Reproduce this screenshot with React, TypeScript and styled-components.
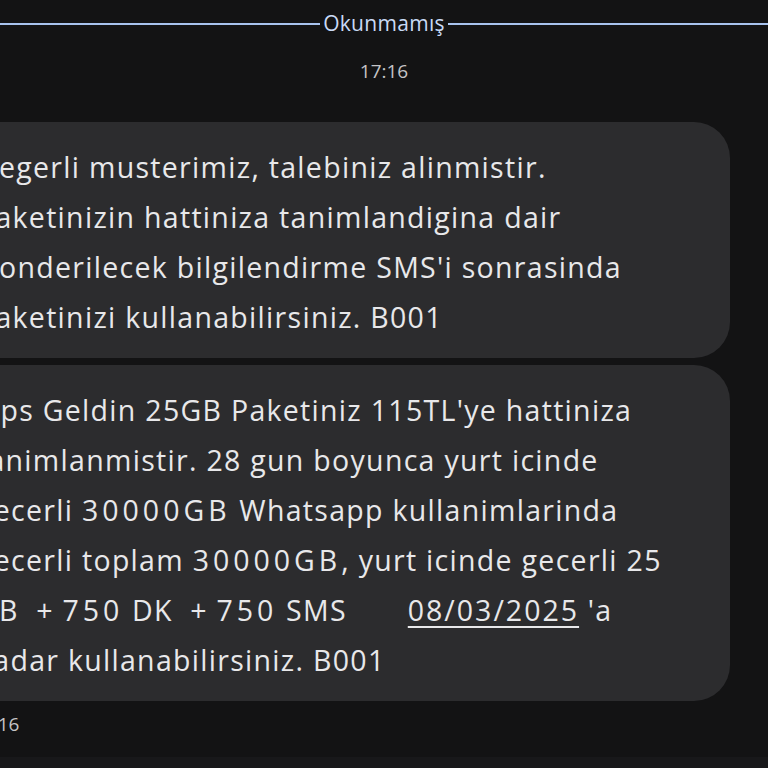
import styled, { createGlobalStyle } from "styled-components";

const GlobalStyle = createGlobalStyle`
    html, body {
        margin: 0;
        padding: 0;
        background-color: #131314;
    }
    body {
        font-family: Roboto, "Noto Sans", Arial, sans-serif;
    }
`;

const messages = [
    {
        id: 1,
        text:
            "Degerli musterimiz, talebiniz alinmistir.\n" +
            "Paketinizin hattiniza tanimlandigina dair\n" +
            "Gonderilecek bilgilendirme SMS'i sonrasinda\n" +
            "Paketinizi kullanabilirsiniz. B001",
    },
];

const App = () => {
    return (
        <>
            <GlobalStyle />
            <Screen>
                <Conversation>
                    <Divider>
                        <DividerLine />
                        <DividerLabel>Okunmamış</DividerLabel>
                        <DividerLine />
                    </Divider>
                    <TimeStamp>17:16</TimeStamp>
                    <Thread>
                        {messages.map((m) => (
                            <Bubble key={m.id}>{m.text}</Bubble>
                        ))}
                        <Bubble>
                            {"Ops Geldin 25GB Paketiniz 115TL'ye hattiniza\n" +
                                "tanimlanmistir. 28 gun boyunca yurt icinde\n" +
                                "gecerli "}
                            <Figures $spread={4}>30000GB</Figures>
                            {" Whatsapp kullanimlarinda\ngecerli toplam "}
                            <Figures $spread={4}>30000GB</Figures>
                            {", yurt icinde gecerli 25\nGB  + "}
                            <Figures $spread={4}>750</Figures>
                            {" DK  + "}
                            <Figures $spread={4}>750</Figures>
                            {" SMS       "}
                            <DateLink>08/03/2025</DateLink>
                            {" 'a\nkadar kullanabilirsiniz. B001"}
                        </Bubble>
                    </Thread>
                    <MessageTime>17:16</MessageTime>
                </Conversation>
                <BottomBar />
            </Screen>
        </>
    );
};

export default App;

const Screen = styled.div`
    width: 768px;
    height: 768px;
    overflow: hidden;
    display: flex;
    flex-direction: column;
    background-color: #131314;
`;

const Conversation = styled.div`
    flex: 1;
    min-height: 0;
    overflow: hidden;
    display: flex;
    flex-direction: column;
`;

const Divider = styled.div`
    display: flex;
    align-items: center;
    gap: 3px;
    height: 28px;
    margin-top: 10px;
`;

const DividerLine = styled.div`
    flex: 1;
    height: 2px;
    background-color: #a8c3ee;
`;

const DividerLabel = styled.span`
    font-family: "Open Sans", Roboto, sans-serif;
    font-size: 21px;
    letter-spacing: 0.3px;
    color: #c9daf6;
    line-height: 28px;
    margin-top: -2px;
`;

const TimeStamp = styled.div`
    text-align: center;
    font-family: "Open Sans", Roboto, sans-serif;
    font-size: 19px;
    color: #c4c4c6;
    margin-top: 20px;
    line-height: 26px;
`;

const Thread = styled.div`
    display: flex;
    flex-direction: column;
    gap: 7px;
    margin-top: 38px;
    padding-right: 38px;
`;

const Bubble = styled.div`
    margin-left: -60px;
    padding: 20px 20px 16px 37px;
    background-color: #2c2c2e;
    border-radius: 36px;
    color: #e8e8ea;
    font-family: "Open Sans", Roboto, sans-serif;
    font-size: 28.5px;
    letter-spacing: 1.3px;
    line-height: 50px;
    white-space: pre;
    overflow: hidden;
`;

const Figures = styled.span<{ $spread: number }>`
    letter-spacing: ${(p) => p.$spread}px;
`;

const DateLink = styled.span`
    letter-spacing: 2px;
    text-decoration: underline;
    text-decoration-thickness: 2px;
    text-underline-offset: 5px;
`;

const MessageTime = styled.div`
    margin-left: -29px;
    margin-top: 11px;
    font-family: "Open Sans", Roboto, sans-serif;
    font-size: 19px;
    color: #c4c4c6;
    line-height: 24px;
`;

const BottomBar = styled.div`
    flex-shrink: 0;
    height: 11px;
    background-color: #18181a;
`;
